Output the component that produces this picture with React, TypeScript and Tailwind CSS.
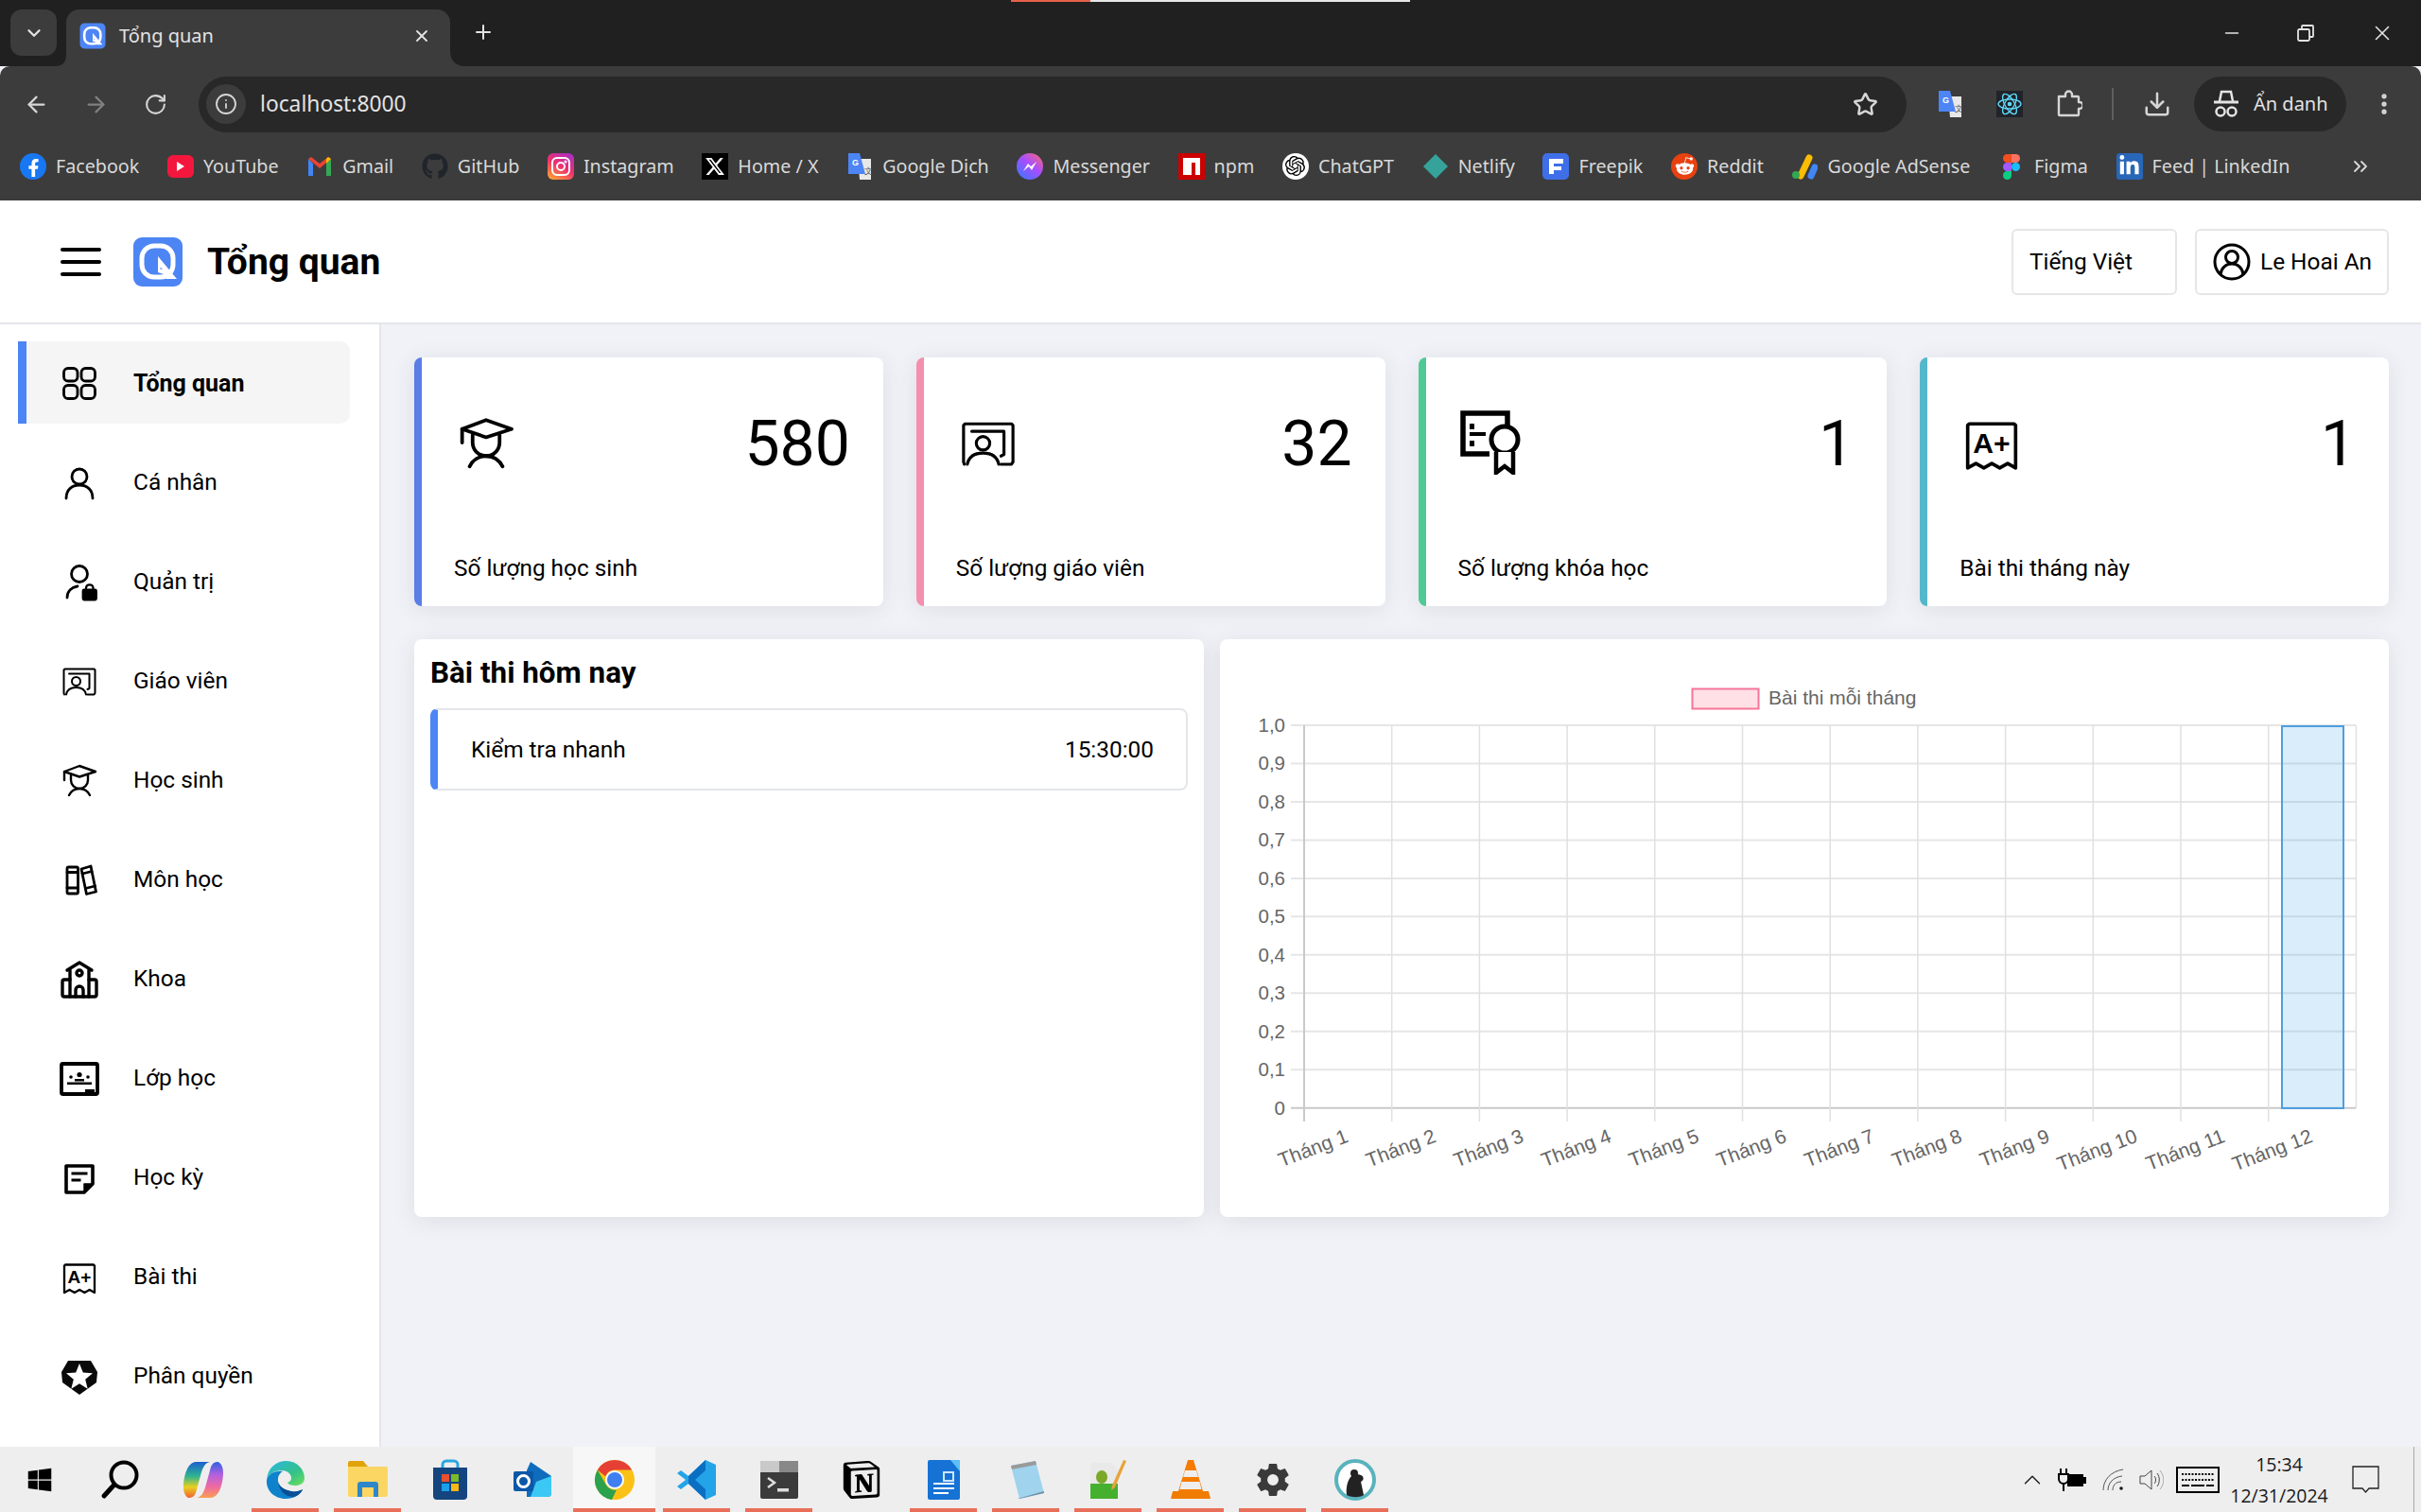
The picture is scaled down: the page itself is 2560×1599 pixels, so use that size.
import type { ReactNode } from 'react';
import { ArrowLeft, ArrowRight, ChevronDown, ChevronUp, ChevronsRight, Download, EllipsisVertical, Info, Minus, Plus, RotateCw, Star, X } from 'lucide-react';
import { FaFacebookF, FaGithub, FaLinkedinIn, FaRedditAlien, FaWindows } from 'react-icons/fa';
import { FaXTwitter } from 'react-icons/fa6';
import { IoSettingsSharp } from 'react-icons/io5';
import { SiNotion, SiOpenai } from 'react-icons/si';

const Logo = ({ size }: { size: number }) => (
  <svg width={size} height={size} viewBox="0 0 54 54">
    <rect x="1" y="1" width="52" height="52" rx="9" fill="#4d85f5" />
    <rect x="10" y="10" width="33" height="33" rx="13" fill="none" stroke="#fff" strokeWidth="5" />
    <path d="M27 21 47 45H36l-3-5-6-2z" fill="#fff" />
    <path d="M29 33l3 1-2 1z" fill="#4d85f5" />
  </svg>
);

const Line = ({ children, size = 48 }: { children: ReactNode; size?: number }) => (
  <svg width={size} height={size} viewBox="0 0 48 48" fill="none" stroke="currentColor" strokeWidth="2.8" strokeLinecap="round" strokeLinejoin="round">
    {children}
  </svg>
);

type IconProps = { size?: number };

const GridIcon = ({ size }: IconProps) => (
  <Line size={size}>
    <rect x="7.5" y="8.5" width="14.5" height="13.5" rx="4.5" />
    <rect x="26" y="8.5" width="14.5" height="13.5" rx="4.5" />
    <rect x="7.5" y="26.5" width="14.5" height="14" rx="4.5" />
    <rect x="26" y="26.5" width="14.5" height="14" rx="4.5" />
  </Line>
);
const PersonIcon = ({ size }: IconProps) => (
  <Line size={size}>
    <circle cx="24" cy="18" r="8" />
    <path d="M10 41c0-9 6-14 14-14s14 5 14 14" />
  </Line>
);
const AdminIcon = ({ size }: IconProps) => (
  <Line size={size}>
    <circle cx="24" cy="16" r="8.500" />
    <path d="M11 41c0-7 5-11 11-12" />
    <rect x="28" y="33" width="13.500" height="10" rx="1" fill="currentColor" />
    <path d="M31 33v-2.500a3.800 3.800 0 0 1 7.500 0V33" strokeWidth="2.200" />
  </Line>
);
const TeacherIcon = ({ size }: IconProps) => (
  <Line size={size}>
    <g strokeWidth="2">
      <path d="M8 38.500 7.500 37V12.500l1-1h31l1 1V37l-1 1.500h-7" />
      <path d="M13 16.500h21.500V32l-2 1" />
      <circle cx="20.500" cy="24.500" r="4.500" />
      <path d="M10 38.500c1-5 5-7.500 10.500-7.500S30 33.500 31 38.500" />
    </g>
  </Line>
);
const StudentIcon = ({ size }: IconProps) => (
  <Line size={size}>
    <g strokeWidth="2.400">
      <path d="M24 9 41 15 24 20.500 8 15z" />
      <path d="M8 15v9" />
      <path d="M15 19v5c0 5 4 9 9 9s9-4 9-9v-5" />
      <path d="M13 40c2-4 6-7 11-7s9 3 11 7" />
    </g>
  </Line>
);
const BooksIcon = ({ size }: IconProps) => (
  <Line size={size}>
    <rect x="11" y="11" width="11.500" height="28" rx="1.500" />
    <path d="M11 16.500h11.500M11 33h11.500" />
    <path d="m26 13 10-3 5.500 27-10 2.500z" />
    <path d="m27 18 10-2.500M30.500 33.500l10-2.500" />
  </Line>
);
const SchoolIcon = ({ size }: IconProps) => (
  <Line size={size}>
    <g strokeWidth="3.400">
      <path d="M11 15 24 7l13 8" />
      <path d="M14 43V15M34 43V15" />
      <circle cx="24" cy="18" r="3" />
      <path d="M20 43v-7a4 4 0 0 1 8 0v7" />
      <path d="M14 25H8a2 2 0 0 0-2 2v14a2 2 0 0 0 2 2h32a2 2 0 0 0 2-2V27a2 2 0 0 0-2-2h-6" />
    </g>
  </Line>
);
const ClassIcon = ({ size }: IconProps) => (
  <Line size={size}>
    <rect x="5" y="9" width="38" height="32" rx="1.500" strokeWidth="3.800" />
    <g fill="currentColor" stroke="none">
      <circle cx="24" cy="20.500" r="2.600" />
      <circle cx="15" cy="23" r="1.800" />
      <circle cx="33" cy="23" r="1.800" />
      <rect x="11" y="28.500" width="26" height="2.500" />
      <rect x="19" y="25" width="10" height="2.500" />
      <rect x="30" y="36" width="10" height="3" />
    </g>
  </Line>
);
const NoteIcon = ({ size }: IconProps) => (
  <Line size={size}>
    <path d="M10 12h28v19l-9 9H10z" strokeWidth="3.600" />
    <path d="M15.500 20h17M15.500 27h10" strokeWidth="3" strokeLinecap="butt" />
    <path d="M38 31h-9v9z" fill="currentColor" strokeWidth="1.500" />
  </Line>
);
const ExamIcon = ({ size }: IconProps) => (
  <Line size={size}>
    <path d="M8 41V12.500l1-1h30l1 1V41l-5.300-3-5.300 3-5.300-3-5.300 3-5.300-3z" strokeWidth="2.300" />
    <text x="24" y="31" textAnchor="middle" fontSize="19" fontWeight="700" fill="currentColor" stroke="none" className="font-['Liberation_Sans',sans-serif]">A+</text>
  </Line>
);
const ShieldIcon = ({ size }: IconProps) => (
  <svg width={size ?? 48} height={size ?? 48} viewBox="0 0 48 48">
    <path d="M12 8h24l7 12-1 11-18 13L6 31 5 20z" fill="#0a0a0a" />
    <path d="m24 11 3.800 9.500 10.200.7-7.800 6.600 2.500 10-8.700-5.500-8.700 5.500 2.500-10-7.800-6.600 10.200-.7z" fill="#fff" />
  </svg>
);
const CertIcon = () => (
  <svg width="66" height="68" viewBox="0 0 66 68" fill="none">
    <path d="M31 46H3V3h47v15" stroke="#000" strokeWidth="5.500" />
    <path d="M10 14h5v6h-5zM10 32h5v6h-5zM10 23h17v4H10z" fill="#000" />
    <circle cx="47" cy="31" r="14" stroke="#000" strokeWidth="5" fill="#fff" />
    <path d="M38 44v22l9-7 9 7V44" stroke="#000" strokeWidth="4.500" fill="#fff" />
  </svg>
);

const navItems = [
  { label: 'Tổng quan', Icon: GridIcon, active: true },
  { label: 'Cá nhân', Icon: PersonIcon },
  { label: 'Quản trị', Icon: AdminIcon },
  { label: 'Giáo viên', Icon: TeacherIcon },
  { label: 'Học sinh', Icon: StudentIcon },
  { label: 'Môn học', Icon: BooksIcon },
  { label: 'Khoa', Icon: SchoolIcon },
  { label: 'Lớp học', Icon: ClassIcon },
  { label: 'Học kỳ', Icon: NoteIcon },
  { label: 'Bài thi', Icon: ExamIcon },
  { label: 'Phân quyền', Icon: ShieldIcon },
];

const Box = ({ className, children }: { className: string; children: ReactNode }) => (
  <span className={`flex h-7 w-7 shrink-0 items-center justify-center overflow-hidden ${className}`}>{children}</span>
);

const TranslateIcon = () => (
  <svg width="28" height="28" viewBox="0 0 28 28">
    <path d="M12 6h14v22H14z" fill="#e8e8e8" />
    <path d="M2 0h12l6 22H2z" fill="#4d85f5" />
    <text x="6" y="13" fontSize="9" fontWeight="700" fill="#fff" className="font-['Liberation_Sans',sans-serif]">G</text>
    <text x="19" y="22" fontSize="9" fill="#555" className="font-['Liberation_Sans',sans-serif]">文</text>
  </svg>
);

const bookmarks: { label: string; icon: ReactNode }[] = [
  { label: 'Facebook', icon: <Box className="rounded-full bg-[#1877f2] text-white"><FaFacebookF size={19} className="mt-1" /></Box> },
  { label: 'YouTube', icon: <Box className="h-[24px] rounded-md bg-[#f4173d] text-white"><svg width="10" height="12" viewBox="0 0 10 12"><path d="M1 1l8 5-8 5z" fill="#fff" /></svg></Box> },
  {
    label: 'Gmail',
    icon: (
      <svg width="28" height="28" viewBox="0 0 28 28">
        <path d="M2 6v18h5V11z" fill="#4285f4" />
        <path d="M21 11v13h5V6z" fill="#34a853" />
        <path d="M2 6l12 10 12-10-3-2-9 7-9-7z" fill="#ea4335" />
        <path d="M21 11l5-5-3-2-2 2z" fill="#fbbc04" />
      </svg>
    ),
  },
  { label: 'GitHub', icon: <Box className="text-[#20252b]"><FaGithub size={28} /></Box> },
  {
    label: 'Instagram',
    icon: (
      <Box className="rounded-md bg-[linear-gradient(30deg,#fdb22c,#f02f6e_50%,#a32dd2)] text-white">
        <svg width="20" height="20" viewBox="0 0 20 20" fill="none" stroke="#fff" strokeWidth="2">
          <rect x="1" y="1" width="18" height="18" rx="5" />
          <circle cx="10" cy="10" r="4" />
          <circle cx="15" cy="5" r=".6" />
        </svg>
      </Box>
    ),
  },
  { label: 'Home / X', icon: <Box className="bg-black text-white"><FaXTwitter size={22} /></Box> },
  { label: 'Google Dịch', icon: <TranslateIcon /> },
  {
    label: 'Messenger',
    icon: (
      <Box className="rounded-full bg-[linear-gradient(40deg,#2f7bff,#a94dff_55%,#ff6a70)]">
        <svg width="16" height="14" viewBox="0 0 16 14"><path d="M1 12l5-8 3 3 6-5-5 9-3-4z" fill="#fff" /></svg>
      </Box>
    ),
  },
  {
    label: 'npm',
    icon: (
      <svg width="28" height="28" viewBox="0 0 28 28">
        <rect width="28" height="28" fill="#c00" />
        <path d="M5 5h18v18h-5V10h-4v13H5z" fill="#fff" />
      </svg>
    ),
  },
  { label: 'ChatGPT', icon: <Box className="rounded-full bg-white text-black"><SiOpenai size={21} /></Box> },
  {
    label: 'Netlify',
    icon: (
      <svg width="28" height="28" viewBox="0 0 28 28">
        <path d="M14 1 27 14 14 27 1 14z" fill="#35a39a" />
      </svg>
    ),
  },
  {
    label: 'Freepik',
    icon: (
      <svg width="28" height="28" viewBox="0 0 28 28">
        <rect width="28" height="28" rx="5" fill="#3f6fe8" />
        <path d="M7 6h15v5H12v3h8v4h-8v4H7z" fill="#fff" />
      </svg>
    ),
  },
  { label: 'Reddit', icon: <Box className="rounded-full bg-[#e8410f] text-white"><FaRedditAlien size={21} /></Box> },
  {
    label: 'Google AdSense',
    icon: (
      <svg width="28" height="28" viewBox="0 0 28 28">
        <path d="M10 24 19 5" stroke="#fbbc04" strokeWidth="7" strokeLinecap="round" />
        <path d="M21 24l4-9" stroke="#4285f4" strokeWidth="7" strokeLinecap="round" />
        <circle cx="5" cy="23" r="4" fill="#34a853" />
      </svg>
    ),
  },
  {
    label: 'Figma',
    icon: (
      <svg width="28" height="28" viewBox="0 0 28 28">
        <path d="M14 1H9.500a4.500 4.500 0 0 0 0 9H14z" fill="#f24e1e" />
        <path d="M14 1h4.500a4.500 4.500 0 0 1 0 9H14z" fill="#ff7262" />
        <path d="M14 10H9.500a4.500 4.500 0 0 0 0 9H14z" fill="#a259ff" />
        <circle cx="18.500" cy="14.500" r="4.500" fill="#1abcfe" />
        <path d="M14 19H9.500a4.500 4.500 0 1 0 4.500 4.500z" fill="#0acf83" />
      </svg>
    ),
  },
  { label: 'Feed | LinkedIn', icon: <Box className="rounded-[3px] bg-[#2866b8] text-white"><FaLinkedinIn size={23} /></Box> },
];

const stats = [
  { value: '580', label: 'Số lượng học sinh', border: 'border-l-[#5a7de6]', icon: <StudentIcon size={76} /> },
  { value: '32', label: 'Số lượng giáo viên', border: 'border-l-[#f48fae]', icon: <TeacherIcon size={76} /> },
  { value: '1', label: 'Số lượng khóa học', border: 'border-l-[#50c994]', icon: <span className="ml-[6px] flex"><CertIcon /></span> },
  { value: '1', label: 'Bài thi tháng này', border: 'border-l-[#54b7cb]', icon: <ExamIcon size={76} /> },
];

const MonthChart = () => {
  const rows = ['1,0', '0,9', '0,8', '0,7', '0,6', '0,5', '0,4', '0,3', '0,2', '0,1', '0'];
  const months = Array.from({ length: 12 }, (_, i) => i);
  const xAt = (i: number) => 89 + 92.7 * i;
  const yAt = (i: number) => 91 + 40.47 * i;
  return (
    <svg width="1236" height="611" className="block font-['Liberation_Sans',sans-serif]">
      <rect x="499.500" y="52.500" width="70" height="21" fill="#ffe0e6" stroke="#f5769a" strokeWidth="2" />
      <text x="580" y="69" fontSize="21" fill="#666">Bài thi mỗi tháng</text>
      {rows.map((label, i) => (
        <g key={label}>
          <line x1="75" x2="1201" y1={yAt(i)} y2={yAt(i)} stroke={i === 10 ? '#c9c9c9' : '#e6e6e6'} strokeWidth="2" />
          <text x="69" y={yAt(i) + 7} fontSize="20.500" fill="#666" textAnchor="end">{label}</text>
        </g>
      ))}
      {[...months, 12].map((i) => (
        <line key={i} x1={xAt(i)} x2={xAt(i)} y1="91" y2={i === 12 ? 496 : 510} stroke={i === 0 ? '#c9c9c9' : '#e0e0e0'} strokeWidth={i === 0 ? 2 : 1.500} />
      ))}
      <rect x="1123" y="92" width="65" height="404" fill="#36a2eb" fillOpacity=".19" stroke="#4f9fdc" strokeWidth="2" />
      {months.map((i) => {
        const x = xAt(i) + 48;
        return (
          <text key={i} x={x} y="531" fontSize="21" fill="#666" textAnchor="end" transform={`rotate(-21 ${x} 531)`}>
            Tháng {i + 1}
          </text>
        );
      })}
    </svg>
  );
};

const taskColor = 'bg-[#e96f5a]';

const taskbarIcons: { icon: ReactNode; open?: boolean; active?: boolean }[] = [
  {
    icon: (
      <svg width="44" height="44" viewBox="0 0 44 44" fill="none" stroke="#000" strokeWidth="4">
        <circle cx="25" cy="17" r="13.500" />
        <path d="M15 27 4 39" strokeWidth="5" strokeLinecap="round" />
      </svg>
    ),
  },
  {
    icon: (
      <svg width="44" height="44" viewBox="0 0 44 44">
        <defs>
          <linearGradient id="cpA" x1="0" y1="0" x2="0" y2="1"><stop offset="0" stopColor="#1a5fd0" /><stop offset=".4" stopColor="#2fb58f" /><stop offset=".7" stopColor="#e8d020" /><stop offset="1" stopColor="#f06030" /></linearGradient>
          <linearGradient id="cpB" x1="0" y1="0" x2="0" y2="1"><stop offset="0" stopColor="#3060e0" /><stop offset=".35" stopColor="#b060e0" /><stop offset=".7" stopColor="#f06aa0" /><stop offset="1" stopColor="#f8a050" /></linearGradient>
        </defs>
        <path d="M14 3h15c-5 1-7 5-9 11l-5 18c-1 5-3 9-8 9-3 0-6-5-6-11C1 17 6 3 14 3z" fill="url(#cpA)" />
        <path d="M30 41H15c5-1 7-5 9-11l5-18c1-5 3-9 8-9 3 0 6 5 6 11 0 13-5 27-13 27z" fill="url(#cpB)" />
      </svg>
    ),
  },
  {
    open: true,
    icon: (
      <svg width="44" height="44" viewBox="0 0 44 44">
        <defs>
          <linearGradient id="edgeA" x1="0" y1="0" x2="1" y2="1"><stop offset="0" stopColor="#2bb5e8" /><stop offset=".6" stopColor="#34c28a" /><stop offset="1" stopColor="#6ee05a" /></linearGradient>
        </defs>
        <path d="M2 22C3 9 12 2 23 2c11 0 19 9 19 18 0 6-5 8-10 8-4 0-7-1-8-3 3-1 4-3 4-5 0-4-4-8-10-8C10 12 4 16 2 22z" fill="url(#edgeA)" />
        <path d="M2 22c-1 11 8 20 20 20 9 0 15-4 18-10-5 3-11 3-16 1-7-2-11-7-10-12 0-4 3-7 5-8C10 12 4 16 2 22z" fill="#0f82cc" />
        <path d="M14 22c0 9 6 18 16 18 6-1 9-5 10-8-5 3-11 3-16 1-6-2-10-6-10-11z" fill="#0a4f96" />
      </svg>
    ),
  },
  {
    open: true,
    icon: (
      <svg width="44" height="44" viewBox="0 0 44 44">
        <path d="M1 4a2 2 0 0 1 2-2h14l5 6H1z" fill="#e0a30a" />
        <path d="M1 8h40a2 2 0 0 1 2 2v28a2 2 0 0 1-2 2H3a2 2 0 0 1-2-2z" fill="#fcd663" />
        <path d="M11 40V27a3 3 0 0 1 3-3h16a3 3 0 0 1 3 3v13h-5V30H16v10z" fill="#2f86c9" />
      </svg>
    ),
  },
  {
    icon: (
      <svg width="44" height="44" viewBox="0 0 44 44">
        <path d="M14 9V6a4 4 0 0 1 4-4h8a4 4 0 0 1 4 4v3" fill="none" stroke="#2aa6e0" strokeWidth="3" />
        <path d="M4 9h36v30a4 4 0 0 1-4 4H8a4 4 0 0 1-4-4z" fill="#14457f" />
        <rect x="13" y="16" width="8" height="8" fill="#e8502f" />
        <rect x="23" y="16" width="8" height="8" fill="#7cbb2a" />
        <rect x="13" y="26" width="8" height="8" fill="#1aa0e8" />
        <rect x="23" y="26" width="8" height="8" fill="#fcb813" />
      </svg>
    ),
  },
  {
    icon: (
      <svg width="44" height="44" viewBox="0 0 44 44">
        <path d="M20 3 42 18v18a4 4 0 0 1-4 4H16V12z" fill="#0f6cbd" />
        <path d="M26 24l16-6v18a4 4 0 0 1-4 4H20z" fill="#3cc8f5" />
        <rect x="2" y="13" width="21" height="21" rx="2" fill="#0a58a8" />
        <circle cx="12.500" cy="23.500" r="6" fill="none" stroke="#fff" strokeWidth="3" />
      </svg>
    ),
  },
  {
    open: true,
    active: true,
    icon: (
      <svg width="44" height="44" viewBox="0 0 44 44">
        <circle cx="22" cy="22" r="21" fill="#fbc116" />
        <path d="M22 1a21 21 0 0 1 18.200 10.500H22a10.500 10.500 0 0 0-9.800 6.800L3.800 11.500A21 21 0 0 1 22 1z" fill="#e64034" />
        <path d="M3.800 11.500 12.400 26.500a10.500 10.500 0 0 0 11.500 6L19 43A21 21 0 0 1 3.800 11.500z" fill="#2ca24c" />
        <circle cx="22" cy="22" r="10" fill="#fff" />
        <circle cx="22" cy="22" r="8" fill="#3f7ff0" />
      </svg>
    ),
  },
  {
    open: true,
    icon: (
      <svg width="44" height="44" viewBox="0 0 44 44">
        <path d="M31 1 42 6v32l-11 5L13 26 5 32l-4-3 9-7-9-7 4-3 8 6z" fill="#23a4e8" />
        <path d="M31 1v42L13 26l0-8zM31 12 20 22l11 10z" fill="#0a6fc2" fillRule="evenodd" />
      </svg>
    ),
  },
  {
    open: true,
    icon: (
      <svg width="44" height="44" viewBox="0 0 44 44">
        <rect x="2" y="2" width="40" height="40" rx="2" fill="#3b3b3b" />
        <rect x="2" y="2" width="20" height="12" fill="#c9c9c9" />
        <rect x="22" y="2" width="20" height="12" fill="#888" />
        <path d="m10 20 7 5-7 5" fill="none" stroke="#ddd" strokeWidth="2.500" />
        <rect x="20" y="31" width="12" height="3.500" fill="#ddd" />
      </svg>
    ),
  },
  { icon: <span className="flex h-[42px] w-[42px] items-center justify-center text-black"><SiNotion size={40} /></span> },
  {
    open: true,
    icon: (
      <svg width="44" height="44" viewBox="0 0 44 44">
        <path d="M5 3a2 2 0 0 1 2-2h30a2 2 0 0 1 2 2v38a2 2 0 0 1-2 2H7a2 2 0 0 1-2-2z" fill="#1672d4" />
        <path d="M29 1h8a2 2 0 0 1 2 2v10z" fill="#5cc0f5" />
        <rect x="22" y="14" width="10" height="9" fill="none" stroke="#cfe6fb" strokeWidth="2" />
        <path d="M11 26h22M11 31h22M11 36h16" stroke="#fff" strokeWidth="2" />
      </svg>
    ),
  },
  {
    open: true,
    icon: (
      <svg width="44" height="44" viewBox="0 0 44 44">
        <path d="M6 7 32 2l9 34-26 6z" fill="#9fd3ee" />
        <path d="M41 36 15 42l-2 0 28-8z" fill="#6f8fa5" />
        <path d="M6 7 32 2l1 4-26 5z" fill="#9a9a9a" />
      </svg>
    ),
  },
  {
    open: true,
    icon: (
      <svg width="44" height="44" viewBox="0 0 44 44">
        <path d="M3 4h22l7 7v31H3z" fill="#e9e9e9" />
        <path d="M3 26h29v16H3z" fill="#45b02e" />
        <path d="m38 1 3 1-12 28-4 3 1-5z" fill="#e8a33a" />
        <ellipse cx="15" cy="19" rx="6" ry="7" fill="#7ca82a" />
      </svg>
    ),
  },
  {
    open: true,
    icon: (
      <svg width="44" height="44" viewBox="0 0 44 44">
        <path d="M19 1h6l10 33H9z" fill="#f57c00" />
        <path d="M16 12h12l2 7H14zM12.500 24h19l2 8h-23z" fill="#eee" />
        <path d="M3 34h38l2 8H1z" fill="#ef7c00" />
      </svg>
    ),
  },
  { open: true, icon: <span className="text-[#3a3a3a]"><IoSettingsSharp size={38} /></span> },
  {
    open: true,
    icon: (
      <svg width="44" height="44" viewBox="0 0 44 44">
        <circle cx="22" cy="22" r="20" fill="#fff" stroke="#59b3bd" strokeWidth="4" />
        <path d="M18 18c-4 4-6 12-5 20 5 3 14 3 18 0l-3-14c4-2 3-6 0-7-3-1-7-2-10 1z" fill="#222" />
        <circle cx="21" cy="15" r="4" fill="#222" />
      </svg>
    ),
  },
];

const Tray = () => (
  <div className="ml-auto flex h-full items-center text-[#1a1a1a]">
    <span className="flex w-10 justify-center"><ChevronUp size={30} strokeWidth={1.100} /></span>
    <span className="flex w-11 justify-center">
      <svg width="30" height="26" viewBox="0 0 30 26">
        <path d="M3 1v6M9 1v6M1 7h10v5a5 5 0 0 1-10 0zM6 17v8" fill="none" stroke="#000" strokeWidth="2" />
        <rect x="10" y="7" width="17" height="13" fill="#000" />
        <rect x="27" y="10" width="3" height="7" fill="#000" />
      </svg>
    </span>
    <span className="flex w-11 justify-center">
      <svg width="24" height="24" viewBox="0 0 24 24" fill="none" stroke="#555" strokeWidth="1">
        <path d="M1 23C1 12 9 3 22 1" />
        <path d="M6 23c0-8 6-14 15-15" />
        <path d="M11 23c0-5 3-9 9-9" />
        <circle cx="20" cy="21" r="1.800" fill="#111" stroke="none" />
      </svg>
    </span>
    <span className="flex w-9 justify-center">
      <svg width="26" height="24" viewBox="0 0 26 24" fill="none" stroke="#444" strokeWidth="1">
        <path d="M1 8h5l7-6v20l-7-6H1z" />
        <path d="M16 8c2 2 2 6 0 8M19 5c3 4 3 10 0 14" />
        <path d="M22 2c5 6 5 14 0 20" stroke="#aaa" />
      </svg>
    </span>
    <span className="flex w-[62px] justify-center">
      <svg width="46" height="28" viewBox="0 0 46 28" fill="none" stroke="#000">
        <rect x="1" y="1" width="44" height="26" strokeWidth="2" />
        <path d="M6 8h34M6 14h34" strokeWidth="2" strokeDasharray="2 1.500" />
        <path d="M6 20h8M16 20h14M32 20h8" strokeWidth="2" />
      </svg>
    </span>
    <div className="flex w-[110px] flex-col items-center text-[19.500px] leading-[33px] font-['Open_Sans',sans-serif]">
      <span>15:34</span>
      <span>12/31/2024</span>
    </div>
    <span className="flex w-[74px] justify-center">
      <svg width="30" height="30" viewBox="0 0 30 30" fill="none" stroke="#222" strokeWidth="1.300"><path d="M1 1h27v23H18l-3.500 4L11 24H1z" /></svg>
    </span>
    <span className="ml-[13px] mr-[7px] h-full w-px bg-[#a9a9a9]" />
  </div>
);

export default function App() {
  return (
    <div className="flex h-[1599px] w-[2560px] flex-col overflow-hidden bg-[#f0f2f7] font-['Roboto',sans-serif] text-black">
      {/* Tab strip */}
      <div className="relative flex h-[70px] shrink-0 items-end bg-[#202020] font-['Noto_Sans',sans-serif] text-[#e3e3e3]">
        <div className="absolute left-[1069px] top-0 h-0.5 w-[84px] bg-[#e8604a]" />
        <div className="absolute left-[1153px] top-0 h-0.5 w-[338px] bg-[#e6e6e6]" />
        <div className="mb-[11px] ml-[11px] flex h-[49px] w-[49px] items-center justify-center rounded-t-xl rounded-b-xl bg-[#3c3c3c]">
          <ChevronDown size={22} strokeWidth={2.500} />
        </div>
        <div className="relative ml-[10px] flex h-[60px] w-[406px] items-center rounded-t-[14px] bg-[#3c3c3c] pb-[4px] pl-[14px] pr-[20px]">
          <svg width="12" height="12" viewBox="0 0 12 12" className="absolute -left-[12px] bottom-0"><path d="M12 0v12H0C8 12 12 8 12 0z" fill="#3c3c3c" /></svg>
          <svg width="16" height="16" viewBox="0 0 16 16" className="absolute -right-[16px] bottom-0"><path d="M0 0v16h16C6 16 0 10 0 0z" fill="#3c3c3c" /></svg>
          <Logo size={28} />
          <span className="ml-[14px] text-[20px]">Tổng quan</span>
          <X size={20} className="ml-auto" strokeWidth={2.200} />
        </div>
        <Plus size={24} className="mb-[24px] ml-[23px]" strokeWidth={2} />
        <div className="mb-[22px] ml-auto flex items-center">
          <Minus size={22} className="mr-[57px]" strokeWidth={1.800} />
          <svg width="20" height="20" viewBox="0 0 20 20" fill="none" stroke="#e3e3e3" strokeWidth="1.800" className="mr-[58px]">
            <rect x="2" y="6" width="12" height="12" rx="1.500" />
            <path d="M6 6V3a1 1 0 0 1 1-1h10a1 1 0 0 1 1 1v10a1 1 0 0 1-1 1h-3" />
          </svg>
          <X size={26} className="mr-[28px]" strokeWidth={1.500} />
        </div>
      </div>

      {/* Toolbar */}
      <div className="flex h-[80px] shrink-0 items-center rounded-t-[10px] bg-[#3c3c3c] text-[#d6d6d6]">
        <ArrowLeft size={27} className="ml-[25px]" strokeWidth={2} />
        <ArrowRight size={27} className="ml-[36px] text-[#808080]" strokeWidth={2} />
        <RotateCw size={25} className="ml-[37px]" strokeWidth={2} />
        <div className="ml-[33px] flex h-[59px] w-[1806px] items-center rounded-full bg-[#282828] pl-2 pr-[30px] font-['Noto_Sans',sans-serif]">
          <span className="flex h-[42px] w-[42px] items-center justify-center rounded-full bg-[#3c3c3c]"><Info size={24} strokeWidth={1.800} /></span>
          <span className="ml-[15px] text-[22.800px] text-[#e3e3e3]">localhost:8000</span>
          <Star size={27} className="ml-auto" strokeWidth={2.200} />
        </div>
        <span className="ml-[32px]"><TranslateIcon /></span>
        <span className="ml-[35px] flex h-7 w-7 items-center justify-center bg-[#20232a] text-[#61dafb]">
          <svg width="26" height="26" viewBox="0 0 26 26" fill="none" stroke="#61dafb" strokeWidth="1.300">
            <ellipse cx="13" cy="13" rx="12" ry="5" />
            <ellipse cx="13" cy="13" rx="12" ry="5" transform="rotate(60 13 13)" />
            <ellipse cx="13" cy="13" rx="12" ry="5" transform="rotate(120 13 13)" />
            <circle cx="13" cy="13" r="2.300" fill="#61dafb" stroke="none" />
          </svg>
        </span>
        <svg width="28" height="30" viewBox="0 0 28 30" fill="none" stroke="#d6d6d6" strokeWidth="2.400" strokeLinejoin="round" className="ml-[35px]">
          <path d="M3 7h7V5a3.500 3.500 0 0 1 7 0v2h6a1 1 0 0 1 1 1v5h1a3.500 3.500 0 0 1 0 7h-1v6a1 1 0 0 1-1 1H4a1 1 0 0 1-1-1z" />
        </svg>
        <span className="ml-[31px] h-[34px] w-0.5 bg-[#5f5f5f]" />
        <Download size={30} className="ml-[31px]" strokeWidth={2} />
        <div className="ml-[24px] flex h-[58px] w-[161px] items-center rounded-full bg-[#282828] pl-[20px] font-['Noto_Sans',sans-serif]">
          <svg width="28" height="30" viewBox="0 0 28 30" fill="none" stroke="#e3e3e3" strokeWidth="2.500">
            <path d="M7 12 9 2h10l2 10" />
            <path d="M1 13h26" strokeWidth="3" />
            <circle cx="8" cy="23" r="4.500" />
            <circle cx="20" cy="23" r="4.500" />
          </svg>
          <span className="ml-[15px] text-[20px] text-[#e3e3e3]">Ẩn danh</span>
        </div>
        <EllipsisVertical size={28} className="ml-[26px]" strokeWidth={2.500} />
      </div>

      {/* Bookmarks */}
      <div className="flex h-[62px] shrink-0 items-center gap-[29.700px] bg-[#3c3c3c] pb-[10px] pl-[21px] font-['Noto_Sans',sans-serif] text-[19.700px] text-[#d9d9d9]">
        {bookmarks.map((b) => (
          <div key={b.label} className="flex items-center gap-[10px]">
            {b.icon}
            <span>{b.label}</span>
          </div>
        ))}
        <ChevronsRight size={24} className="ml-auto mr-[52px]" strokeWidth={1.800} />
      </div>

      {/* App header */}
      <header className="flex h-[131px] shrink-0 items-center border-b-2 border-[#e4e6ea] bg-white pl-[64px] pr-[34px]">
        <div className="flex h-[30px] w-[43px] flex-col justify-between">
          <span className="h-1 rounded-full bg-black" />
          <span className="h-1 rounded-full bg-black" />
          <span className="h-1 rounded-full bg-black" />
        </div>
        <span className="ml-[33px] flex"><Logo size={54} /></span>
        <h1 className="ml-[25px] pt-[2px] text-[39px] font-bold leading-none">Tổng quan</h1>
        <div className="ml-auto flex h-[70px] w-[175px] items-center rounded-md border-2 border-[#e6e6e6] pl-[17px] pt-[2px] text-[24.400px]">Tiếng Việt</div>
        <div className="ml-[19px] flex h-[70px] w-[205px] items-center rounded-md border-2 border-[#e6e6e6] pl-[17px] text-[24.400px]">
          <svg width="40" height="40" viewBox="0 0 40 40" fill="none" stroke="#000" strokeWidth="3">
            <circle cx="20" cy="20" r="18" />
            <circle cx="20" cy="15" r="6.500" />
            <path d="M8 33c1-7 6-11 12-11s11 4 12 11" />
          </svg>
          <span className="ml-[10px] pt-[2px]">Le Hoai An</span>
        </div>
      </header>

      <div className="flex min-h-0 flex-1">
        <aside className="flex w-[403px] shrink-0 flex-col gap-[18px] border-r-2 border-[#e4e6ea] bg-white pt-[18px]">
          {navItems.map(({ label, Icon, active }) => (
            <div
              key={label}
              className={`ml-[19px] flex h-[87px] w-[351px] shrink-0 items-center rounded-r-[10px] border-l-[9px] pl-[32px] ${active ? 'border-[#4d85f5] bg-[#f5f5f5] text-[25px] font-bold' : 'border-transparent text-[24.400px]'}`}
            >
              <Icon />
              <span className="ml-[33px] pt-[2px]">{label}</span>
            </div>
          ))}
        </aside>

        <main className="min-w-0 flex-1 pl-[35px] pr-[34px] pt-[35px]">
          <div className="grid grid-cols-4 gap-[35px]">
            {stats.map((s) => (
              <div key={s.label} className={`flex h-[263px] flex-col justify-between rounded-lg border-l-8 bg-white pb-[25px] pl-[34px] pr-[35px] pt-[52px] shadow-[0_4px_24px_rgba(58,59,69,0.1)] ${s.border}`}>
                <div className="flex h-[76px] items-center justify-between">
                  <span className="-ml-[4px] flex">{s.icon}</span>
                  <span className="pt-[3px] text-[66px] leading-none">{s.value}</span>
                </div>
                <div className="text-[24.400px] leading-[30px]">{s.label}</div>
              </div>
            ))}
          </div>

          <div className="mt-[35px] grid grid-cols-[835px_1fr] gap-[17px]">
            <section className="h-[611px] rounded-lg bg-white px-[17px] pt-[17px] shadow-[0_4px_24px_rgba(58,59,69,0.1)]">
              <h2 className="text-[31.400px] font-bold leading-[38px]">Bài thi hôm nay</h2>
              <div className="mt-[18px] flex h-[87px] items-center justify-between rounded-lg border-2 border-l-8 border-[#e4e6ea] border-l-[#4d85f5] pl-[35px] pr-[34px] pt-[2px] text-[24.400px]">
                <span>Kiểm tra nhanh</span>
                <span>15:30:00</span>
              </div>
            </section>
            <section className="h-[611px] rounded-lg bg-white shadow-[0_4px_24px_rgba(58,59,69,0.1)]">
              <MonthChart />
            </section>
          </div>
        </main>
      </div>

      {/* Windows taskbar */}
      <footer className="flex h-[69px] shrink-0 items-center bg-[#eeeeee]">
        <div className="flex h-full w-[84px] items-center justify-center"><FaWindows size={28} /></div>
        {taskbarIcons.map((t, i) => (
          <div key={i} className={`relative flex h-full w-[87px] items-center justify-center ${t.active ? 'bg-[#f7f7f7]' : ''}`}>
            {t.icon}
            {t.open && <span className={`absolute bottom-0 h-1 ${t.active ? 'inset-x-0' : 'inset-x-2'} ${taskColor}`} />}
          </div>
        ))}
        <Tray />
      </footer>
    </div>
  );
}
